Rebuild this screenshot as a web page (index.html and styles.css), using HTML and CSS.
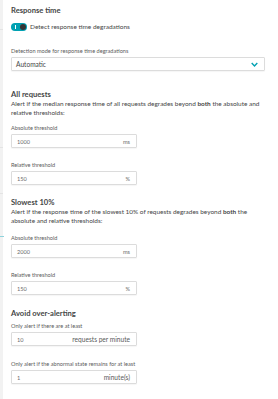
FILE: index.html
```html
<!DOCTYPE html>
<html>
<head>
<meta charset="utf-8">
<link rel="stylesheet" href="styles.css">
</head>
<body>
<div class="page">
  <div class="rail">
    <div class="rail-line l1"></div>
    <div class="rail-line l2"></div>
    <div class="rail-line l3"></div>
    <div class="rail-accent"></div>
  </div>
  <main class="content">
    <h2 class="title first">Response time</h2>
    <div class="toggle-row">
      <span class="toggle"><span class="toggle-mark"></span><span class="toggle-knob"></span></span>
      <span class="toggle-label">Detect response time degradations</span>
    </div>

    <label class="label mode-label">Detection mode for response time degradations</label>
    <div class="select">
      <span>Automatic</span>
      <svg class="chevron" viewBox="0 0 10 6" width="7" height="5"><path d="M1 1 L5 5 L9 1" fill="none" stroke="#00a1b2" stroke-width="2"/></svg>
    </div>

    <h2 class="title sec2">All requests</h2>
    <p class="desc">Alert if the median response time of all requests degrades beyond <b>both</b> the absolute and relative thresholds:</p>
    <label class="label after-desc">Absolute threshold</label>
    <div class="input"><span>1000</span><span class="unit">ms</span></div>
    <label class="label next">Relative threshold</label>
    <div class="input"><span>150</span><span class="unit">%</span></div>

    <h2 class="title sec3">Slowest 10%</h2>
    <p class="desc">Alert if the response time of the slowest 10% of requests degrades beyond <b>both</b> the absolute and relative thresholds:</p>
    <label class="label after-desc2">Absolute threshold</label>
    <div class="input"><span>2000</span><span class="unit">ms</span></div>
    <label class="label next">Relative threshold</label>
    <div class="input"><span>150</span><span class="unit">%</span></div>

    <h2 class="title sec4">Avoid over-alerting</h2>
    <label class="label after-title">Only alert if there are at least</label>
    <div class="input"><span>10</span><span class="unit big">requests per minute</span></div>
    <label class="label next2">Only alert if the abnormal state remains for at least</label>
    <div class="input"><span>1</span><span class="unit big">minute(s)</span></div>
  </main>
</div>
</body>
</html>
```
FILE: styles.css
```css
html, body {
  margin: 0;
  padding: 0;
  background: #ffffff;
}
body {
  font-family: Lato, "Liberation Sans", sans-serif;
  color: #454646;
}
.page {
  display: flex;
  min-height: 399px;
}
.rail {
  position: relative;
  width: 3px;
  flex: 0 0 3px;
  background: #f2f2f2;
}
.rail-line {
  position: absolute;
  left: 0;
  width: 3px;
  height: 1px;
  background: #e4e4e4;
}
.l1 { top: 29px; }
.l2 { top: 147px; }
.l3 { top: 193px; }
.rail-accent {
  position: absolute;
  left: 0;
  top: 236px;
  width: 4px;
  height: 1px;
  background: #8fd3dc;
}
.content {
  flex: 1;
  padding-left: 8px;
  padding-right: 13px;
}
.title {
  margin: 0;
  font-size: 7.6px;
  line-height: 10px;
  font-weight: 700;
  color: #454646;
}
.title.first { margin-top: 5px; }
.title.sec2 { margin-top: 18px; }
.title.sec3 { margin-top: 12px; }
.title.sec4 { margin-top: 13px; }

.toggle-row {
  display: flex;
  align-items: center;
  height: 10px;
  margin-top: 7px;
  gap: 3px;
}
.toggle {
  position: relative;
  display: inline-block;
  width: 16px;
  height: 8px;
  border-radius: 4px;
  background: #00a1b2;
}
.toggle-mark {
  position: absolute;
  left: 4px;
  top: 2px;
  width: 1px;
  height: 4px;
  background: #ffffff;
}
.toggle-knob {
  position: absolute;
  right: 1px;
  top: 1px;
  width: 6px;
  height: 6px;
  border-radius: 50%;
  background: #353535;
}
.toggle-label {
  font-size: 6.5px;
  line-height: 10px;
}

.label {
  display: block;
  font-size: 5.6px;
  line-height: 8px;
  color: #5c5c5c;
  margin-bottom: 2px;
}
.mode-label { margin-top: 15px; }
.after-desc { margin-top: 7px; }
.after-desc2 { margin-top: 9px; }
.after-title { margin-top: 4px; }
.label.next { margin-top: 13px; }
.label.next2 { margin-top: 14px; }

.desc {
  margin: 0;
  font-size: 6.45px;
  line-height: 9px;
  color: #454646;
}
.desc b { font-weight: 700; }

.select {
  box-sizing: border-box;
  display: flex;
  align-items: center;
  justify-content: space-between;
  width: 254px;
  height: 14px;
  padding: 0 6px 0 4px;
  border: 1px solid #dcdcdc;
  border-radius: 1px;
  box-shadow: 0 1px 1px rgba(0,0,0,0.04);
  font-size: 6.6px;
  color: #454646;
}
.chevron { display: block; }

.input {
  box-sizing: border-box;
  display: flex;
  align-items: center;
  justify-content: space-between;
  width: 126px;
  height: 14px;
  padding: 0 6px 0 5px;
  border: 1px solid #dcdcdc;
  border-radius: 1px;
  box-shadow: 0 1px 1px rgba(0,0,0,0.04);
  font-size: 5.6px;
  color: #6b6b6b;
}
.unit { color: #6b6b6b; }
.unit.big { font-size: 6.6px; color: #5a5a5a; }
```
